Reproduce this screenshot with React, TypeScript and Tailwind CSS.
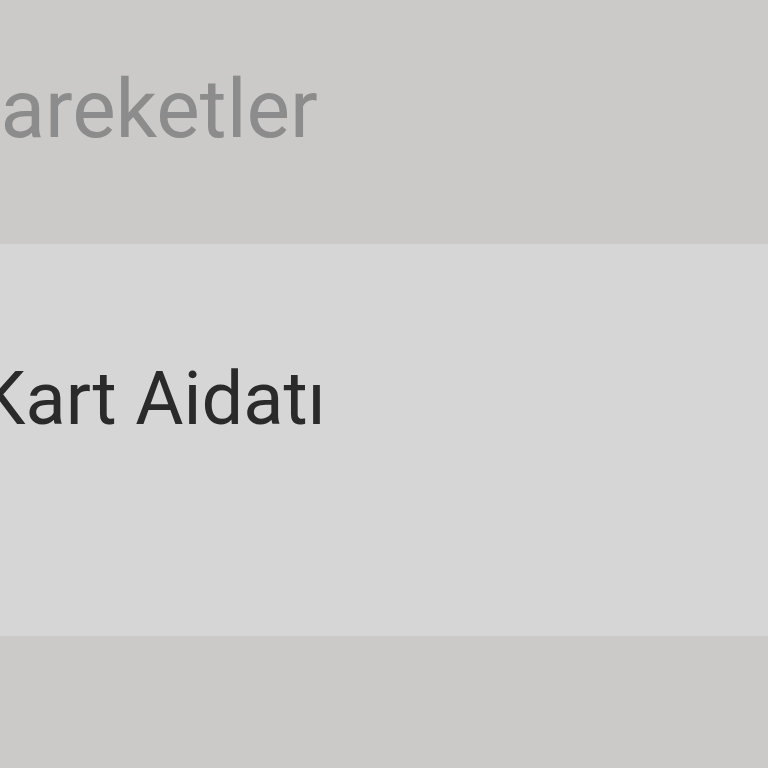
export default function App() {
    return (
        <div className="h-[768px] w-[768px] overflow-hidden bg-[#cbcac8] font-['Roboto',sans-serif]">
            <header className="flex h-[244px] items-start pt-[68px]">
                <h1 className="ml-[-58px] text-[82px] leading-none font-normal text-[#8c8c8c]">Hareketler</h1>
            </header>

            <ul>
                <li className="flex h-[392px] items-start bg-[#d6d6d6] pt-[118px]">
                    <span className="ml-[-21px] text-[74px] leading-none text-[#2a2a2a]">Kart Aidatı</span>
                </li>
            </ul>
        </div>
    )
}
